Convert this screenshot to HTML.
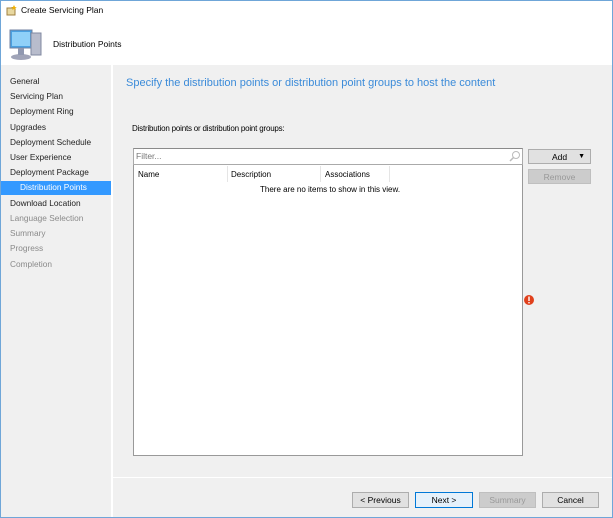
<!DOCTYPE html>
<html><head><meta charset="utf-8"><style>
*{margin:0;padding:0;box-sizing:border-box}
body{width:613px;height:518px;overflow:hidden;font-family:"Liberation Sans",sans-serif;font-size:9px;color:#000;background:#fff;position:relative}
.a{position:absolute;white-space:nowrap}
.nav{position:absolute;left:10px;font-size:8.3px;color:#222}
.dis{color:#8a8a8a}
.btn{position:absolute;background:#e1e1e1;border:1px solid #adadad;text-align:center;font-size:8.5px;line-height:14px}
</style></head><body>
<svg class="a" style="left:6px;top:4px" width="12" height="12"><rect x="1" y="4" width="8" height="7" fill="#e8d8a0" stroke="#a08040"/><path d="M8 1l1 2 2 0-2 1 1 2-2-1-2 1 1-2-2-1 2 0z" fill="#f0b000"/></svg>
<div class="a" style="left:21px;top:5px;font-size:8.5px">Create Servicing Plan</div>
<svg class="a" style="left:7px;top:27px" width="36" height="36"><rect x="3" y="3" width="22" height="18" fill="#4aa0e0" stroke="#7080a0"/><rect x="5" y="5" width="18" height="14" fill="#8fd0f8"/><rect x="24" y="6" width="10" height="22" fill="#b8bccc" stroke="#8088a0"/><ellipse cx="14" cy="30" rx="10" ry="3" fill="#a0a4b8"/><rect x="11" y="21" width="6" height="7" fill="#9098b0"/></svg>
<div class="a" style="left:53px;top:39px;font-size:8.5px">Distribution Points</div>
<div class="a" style="left:0;top:65px;width:613px;height:453px;background:#f0f0f0"></div>
<div class="a" style="left:111px;top:65px;width:2px;height:453px;background:#fff"></div>
<div class="nav" style="top:76px">General</div>
<div class="nav" style="top:91px">Servicing Plan</div>
<div class="nav" style="top:106px">Deployment Ring</div>
<div class="nav" style="top:122px">Upgrades</div>
<div class="nav" style="top:137px">Deployment Schedule</div>
<div class="nav" style="top:152px">User Experience</div>
<div class="nav" style="top:167px">Deployment Package</div>
<div class="a" style="left:1px;top:181px;width:110px;height:14px;background:#3399ff"></div>
<div class="nav" style="top:182px;left:20px;color:#fff">Distribution Points</div>
<div class="nav" style="top:198px">Download Location</div>
<div class="nav dis" style="top:213px">Language Selection</div>
<div class="nav dis" style="top:228px">Summary</div>
<div class="nav dis" style="top:243px">Progress</div>
<div class="nav dis" style="top:259px">Completion</div>
<div class="a" style="left:126px;top:77px;font-size:11px;color:#3b8bd9">Specify the distribution points or distribution point groups to host the content</div>
<div class="a" style="left:132px;top:124px;font-size:8px;letter-spacing:-0.2px">Distribution points or distribution point groups:</div>
<div class="a" style="left:133px;top:148px;width:390px;height:17px;background:#fff;border:1px solid #aaa;border-top-color:#8a8a8a"></div>
<div class="a" style="left:136px;top:151px;font-size:8.5px;color:#777">Filter...</div>
<svg class="a" style="left:509px;top:150px" width="12" height="12"><circle cx="7" cy="5" r="3.5" fill="none" stroke="#bbb"/><path d="M4.5 7.5L1 11" stroke="#bbb" stroke-width="1.5"/></svg>
<div class="a" style="left:133px;top:165px;width:390px;height:291px;background:#fff;border:1px solid #999;border-top:none"></div>
<div class="a" style="left:227px;top:166px;width:1px;height:16px;background:#e5e5e5"></div>
<div class="a" style="left:320px;top:166px;width:1px;height:16px;background:#e5e5e5"></div>
<div class="a" style="left:389px;top:166px;width:1px;height:16px;background:#e5e5e5"></div>
<div class="a" style="left:138px;top:170px;font-size:8px">Name</div>
<div class="a" style="left:231px;top:170px;font-size:8px">Description</div>
<div class="a" style="left:325px;top:170px;font-size:8px">Associations</div>
<div class="a" style="left:260px;top:185px;font-size:8px">There are no items to show in this view.</div>
<div class="btn" style="left:528px;top:149px;width:63px;height:15px">Add <span style="position:absolute;right:5px;top:0;font-size:7px">▼</span></div>
<div class="btn" style="left:528px;top:169px;width:63px;height:15px;background:#ccc;border-color:#bfbfbf;color:#999">Remove</div>
<svg class="a" style="left:523px;top:294px" width="12" height="12"><circle cx="6" cy="6" r="5" fill="#e0401c"/><rect x="5.3" y="2.5" width="1.4" height="4.5" fill="#fff"/><rect x="5.3" y="8" width="1.4" height="1.4" fill="#fff"/></svg>
<div class="a" style="left:113px;top:477px;width:500px;height:1px;background:#fff"></div>
<div class="btn" style="left:352px;top:492px;width:57px;height:16px">&lt; Previous</div>
<div class="btn" style="left:415px;top:492px;width:58px;height:16px;border-color:#0078d7;background:#e5f1fb">Next &gt;</div>
<div class="btn" style="left:479px;top:492px;width:57px;height:16px;background:#ccc;border-color:#bfbfbf;color:#999">Summary</div>
<div class="btn" style="left:542px;top:492px;width:57px;height:16px">Cancel</div>
<div class="a" style="left:0;top:0;width:613px;height:518px;border:1px solid #6fa6d8"></div>
</body></html>
